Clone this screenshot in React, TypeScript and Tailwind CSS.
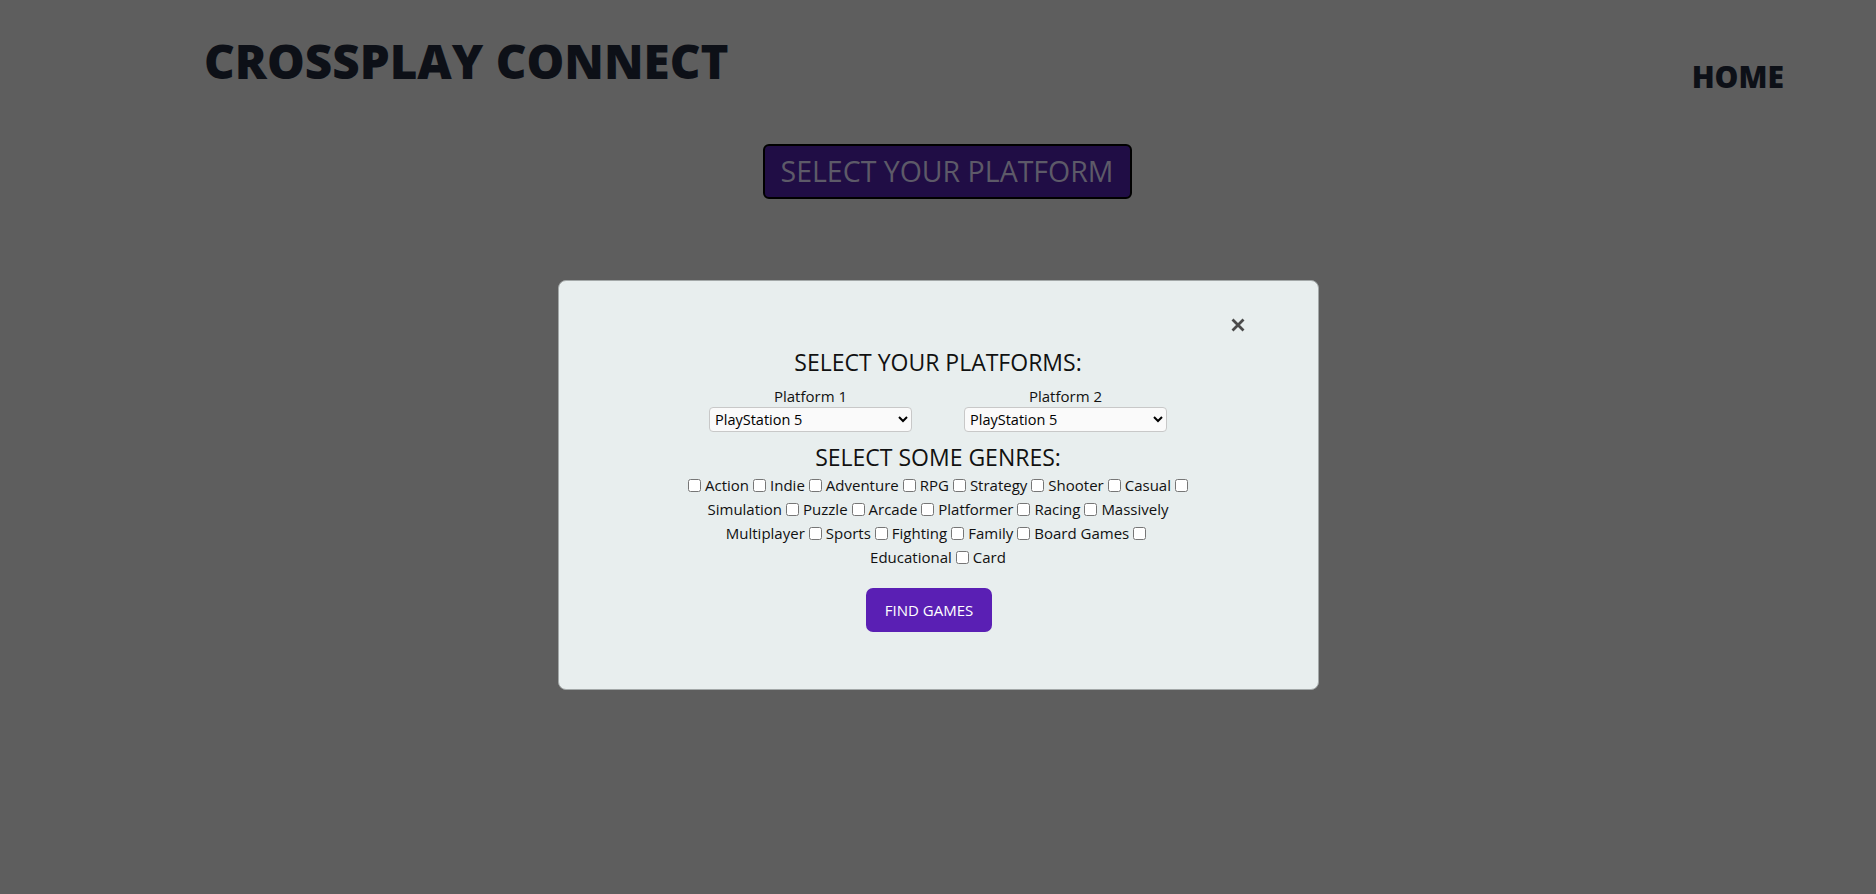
import React from "react";

const line1 = ["Action", "Indie", "Adventure", "RPG", "Strategy", "Shooter", "Casual"];
const line2 = ["Puzzle", "Arcade", "Platformer", "Racing", "Massively"];
const line3 = ["Sports", "Fighting", "Family", "Board Games"];

function Box() {
  return (
    <input
      type="checkbox"
      className="mx-[4px] inline-block h-[13px] w-[13px] align-[-1px]"
    />
  );
}

export default function App() {
  return (
    <div
      className="relative min-h-[894px] w-full overflow-hidden bg-[#5e5e5e]"
      style={{ fontFamily: '"Open Sans", "Noto Sans", sans-serif' }}
    >
      <header className="flex items-start justify-between pl-[204px] pr-[92px]">
        <h1 className="mt-[37px] text-[47.5px] font-extrabold leading-none text-[#0d1017]">
          CROSSPLAY CONNECT
        </h1>
        <nav className="mt-[62px] text-[30px] font-extrabold leading-none text-[#0d1017]">HOME</nav>
      </header>

      <div className="flex justify-center pl-[18px] pt-[52px]">
        <button className="h-[55px] w-[369px] rounded-[6px] border-2 border-black bg-[#200d45] text-[28.5px] text-[#5d5a68]">
          SELECT YOUR PLATFORM
        </button>
      </div>

      <div className="absolute inset-0 flex justify-center pt-[280px]">
        <div className="flex h-[410px] w-[761px] flex-col items-center rounded-[8px] border border-[#a3a8a8] bg-[#e8eeee] text-[#111]">
          <div className="flex w-full justify-end pr-[73px] pt-[37px]">
            <svg width="14" height="14" viewBox="0 0 14 14" className="text-[#4a4a4a]">
              <path d="M1.5 1.5 L12.5 12.5 M12.5 1.5 L1.5 12.5" stroke="currentColor" strokeWidth="2.8" />
            </svg>
          </div>
          <h2 className="mt-[14px] text-[23px] leading-[32px]">SELECT YOUR PLATFORMS:</h2>
          <div className="mt-[7px] flex gap-[52px]">
            {["Platform 1", "Platform 2"].map((p) => (
              <div key={p} className="flex flex-col items-center">
                <label className="text-[15px] leading-[22px]">{p}</label>
                <select className="h-[25px] w-[203px] rounded-[4px] border border-[#c8c8c8] bg-[#fafafa] pl-[1px] text-[14.5px] text-black">
                  <option>PlayStation 5</option>
                </select>
              </div>
            ))}
          </div>
          <h2 className="mt-[9px] text-[23px] leading-[32px]">SELECT SOME GENRES:</h2>
          <div className="text-center text-[15px] leading-[24px]">
            <div>
              {line1.map((g) => (
                <React.Fragment key={g}>
                  <Box />
                  {g}
                </React.Fragment>
              ))}
              <Box />
            </div>
            <div>
              Simulation
              {line2.map((g) => (
                <React.Fragment key={g}>
                  <Box />
                  {g}
                </React.Fragment>
              ))}
            </div>
            <div>
              Multiplayer
              {line3.map((g) => (
                <React.Fragment key={g}>
                  <Box />
                  {g}
                </React.Fragment>
              ))}
              <Box />
            </div>
            <div>
              Educational
              <Box />
              Card
            </div>
          </div>
          <button className="mr-[18px] mt-[19px] h-[44px] w-[126px] rounded-[7px] bg-[#5a1fb4] text-[15px] text-white">
            FIND GAMES
          </button>
        </div>
      </div>
    </div>
  );
}
